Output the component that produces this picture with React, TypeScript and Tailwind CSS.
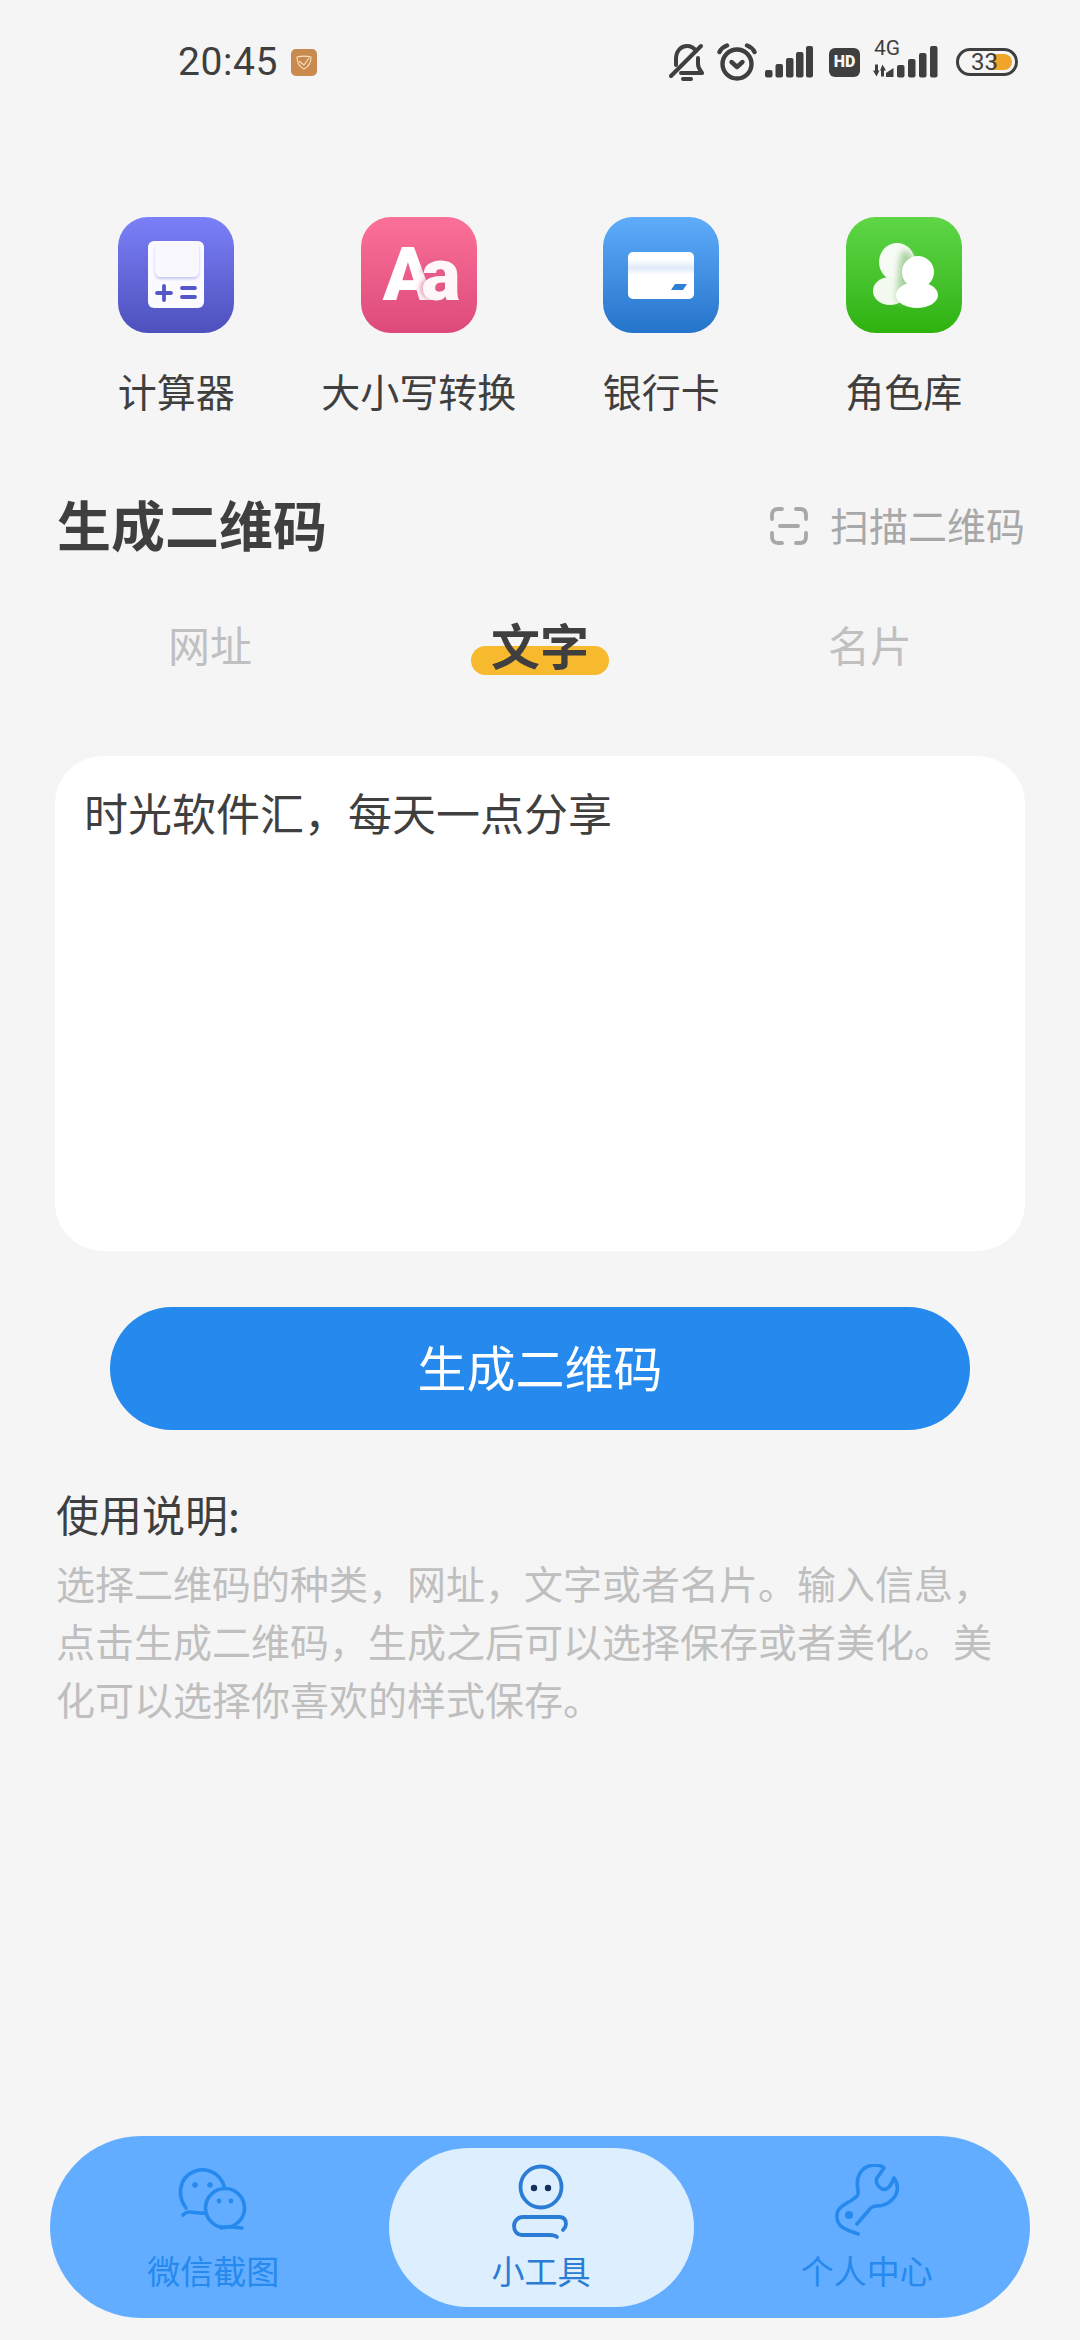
import React from "react";

const Signal = ({ className }: { className?: string }) => (
  <svg viewBox="0 0 48 32" className={className} fill="#3f3f3f">
    <rect x="0" y="24" width="7.500" height="7.500" rx="2" />
    <rect x="10.500" y="18" width="7.500" height="13.500" rx="2" />
    <rect x="21" y="12" width="7.500" height="19.500" rx="2" />
    <rect x="31" y="6" width="7.500" height="25.500" rx="2" />
    <rect x="41" y="0" width="7" height="31.500" rx="2" />
  </svg>
);

const StatusBar = () => (
  <div className="flex h-[124px] items-center pl-[178px] pr-[62px]">
    <span className="font-['Roboto',sans-serif] text-[39px] leading-none tracking-[0.6px] text-[#3f3f3f]">20:45</span>
    <div className="ml-[13px] flex h-[27px] w-[26px] items-center justify-center rounded-[5px] bg-[#c88a4e]">
      <svg viewBox="0 0 18 18" className="h-[18px] w-[18px]" fill="none" stroke="#fbe3bd" strokeWidth="1.100" strokeLinejoin="round">
        <path d="M2 4 C6 3 12 3 16 4 C16 10 13 14 9 16 C5 14 2 10 2 4 Z" />
        <path d="M4 8 L9 12 L14 5" />
      </svg>
    </div>
    <div className="ml-auto flex items-center">
      <svg viewBox="0 0 36 38" className="h-[38px] w-[36px]" fill="none" stroke="#3f3f3f" strokeWidth="4" strokeLinecap="round" strokeLinejoin="round">
        <path d="M8 22 V16 C8 8 13 3 19 3 C23 3 26 5 28 8" />
        <path d="M30 15 V21 C30 25 32 27 34 30 H13" />
        <path d="M3 33 L33 3" />
        <path d="M15 36 H23" />
      </svg>
      <svg viewBox="0 0 40 38" className="ml-[13px] h-[38px] w-[40px]" fill="none" stroke="#3f3f3f" strokeWidth="4.400" strokeLinecap="round" strokeLinejoin="round">
        <circle cx="20" cy="21" r="14.500" />
        <path d="M14.500 19 L20 24 L25.500 19" />
        <path d="M2.500 9 C4 6 7 3.500 10 2.500" />
        <path d="M37.500 9 C36 6 33 3.500 30 2.500" />
      </svg>
      <Signal className="ml-[8px] h-[32px] w-[48px]" />
      <div className="ml-[16px] flex h-[29px] w-[31px] items-center justify-center rounded-[6px] bg-[#3f3f3f] font-['Roboto',sans-serif] text-[16px] leading-none font-black text-[#f5f5f5]">HD</div>
      <div className="relative ml-[12px] h-[36px] w-[66px]">
        <span className="absolute top-[-6px] left-[2px] font-['Roboto',sans-serif] text-[21px] leading-[21px] text-[#3f3f3f]">4G</span>
        <svg viewBox="0 0 15 12" className="absolute top-[20px] left-0 h-[13px] w-[15px]" fill="#3f3f3f">
          <path d="M3 0 H6 V6 H7.500 L4.500 12 L1 6 H3 Z" />
          <path d="M9 12 H12 V6 H14 L10.500 0 L8 6 H9 Z" />
        </svg>
        <svg viewBox="0 0 52 32" className="absolute top-[2px] left-[14px] h-[32px] w-[52px]" fill="#3f3f3f">
          <path d="M0 31 V27 L7.500 22 V31 Z" />
          <rect x="11" y="19" width="7.500" height="12.500" rx="2" />
          <rect x="22" y="13" width="7.500" height="18.500" rx="2" />
          <rect x="33" y="7" width="7.500" height="24.500" rx="2" />
          <rect x="44" y="0" width="7.500" height="31.500" rx="2" />
        </svg>
      </div>
      <div className="relative ml-[18px] flex h-[28px] w-[62px] items-center rounded-full border-[3px] border-[#3f3f3f]">
        <div className="absolute top-[3px] right-[3px] h-[16px] w-[19px] rounded-r-full bg-[#f0a429]" />
        <span className="relative ml-[12px] font-['Roboto',sans-serif] text-[24px] leading-none text-[#3f3f3f]">33</span>
      </div>
    </div>
  </div>
);

const CalculatorIcon = () => (
  <div className="flex h-[116px] w-[116px] items-center justify-center rounded-[30px] bg-gradient-to-b from-[#7b80f8] to-[#4e50bd]">
    <svg viewBox="0 0 56 68" className="h-[68px] w-[56px]">
      <defs>
        <filter id="screenShadow" x="-20%" y="-20%" width="140%" height="150%">
          <feDropShadow dx="0" dy="2" stdDeviation="1.500" floodColor="#8a8be0" floodOpacity="0.5" />
        </filter>
      </defs>
      <rect width="56" height="67" rx="6" fill="#fbfbff" />
      <rect x="7" y="1" width="44" height="35" rx="6" fill="#f8f8fe" filter="url(#screenShadow)" />
      <path d="M9 52 H23 M16 45 V59" stroke="#5557c8" strokeWidth="3.800" strokeLinecap="round" />
      <path d="M34 47 H47 M34 56 H47" stroke="#5557c8" strokeWidth="3.800" strokeLinecap="round" />
    </svg>
  </div>
);

const CaseIcon = () => (
  <div className="relative h-[116px] w-[116px] overflow-hidden rounded-[30px] bg-gradient-to-b from-[#fb7098] to-[#dd4a7a]">
    <span className="absolute top-[18px] left-[22px] font-['Roboto',sans-serif] text-[74px] leading-[80px] font-black tracking-[-12px] text-white">
      A<span className="text-[#fff6f9] [text-shadow:-3px_0_5px_rgba(214,90,130,0.55)]">a</span>
    </span>
  </div>
);

const CardIcon = () => (
  <div className="flex h-[116px] w-[116px] items-center justify-center rounded-[30px] bg-gradient-to-b from-[#5eacfa] to-[#2474cb]">
    <svg viewBox="0 0 66 47" className="h-[47px] w-[66px]">
      <defs>
        <linearGradient id="cardStripe" x1="0" y1="0" x2="0" y2="1">
          <stop offset="0" stopColor="#ffffff" />
          <stop offset="0.45" stopColor="#e6f0fb" />
          <stop offset="0.55" stopColor="#dfeafa" />
          <stop offset="1" stopColor="#ffffff" />
        </linearGradient>
      </defs>
      <rect width="66" height="47" rx="5" fill="#ffffff" />
      <rect y="7" width="66" height="16" fill="url(#cardStripe)" />
      <path d="M43 38 L47 32 H59 L55 38 Z" fill="#2f7fd4" />
    </svg>
  </div>
);

const PeopleIcon = () => (
  <div className="h-[116px] w-[116px] overflow-hidden rounded-[30px] bg-gradient-to-b from-[#5ed646] to-[#2eb20c]">
    <svg viewBox="0 0 116 116" className="h-[116px] w-[116px]">
      <defs>
        <filter id="personBlur" x="-30%" y="-30%" width="160%" height="160%">
          <feGaussianBlur stdDeviation="3" />
        </filter>
      </defs>
      <ellipse cx="51" cy="45" rx="18" ry="19" fill="#f7fbf5" />
      <ellipse cx="44" cy="74" rx="17" ry="14" fill="#f3f9f0" />
      <path d="M58 32 C50 44 54 60 50 84 L66 84 L68 40 Z" fill="#a9d2a0" filter="url(#personBlur)" />
      <circle cx="72" cy="55" r="16" fill="#ffffff" />
      <ellipse cx="71" cy="78" rx="21" ry="13" fill="#ffffff" />
    </svg>
  </div>
);

const tools = [
  { label: "计算器", Icon: CalculatorIcon },
  { label: "大小写转换", Icon: CaseIcon },
  { label: "银行卡", Icon: CardIcon },
  { label: "角色库", Icon: PeopleIcon },
];

const ChatIcon = () => (
  <svg viewBox="0 0 70 64" className="h-[64px] w-[70px]" fill="none" stroke="#2589ee" strokeWidth="3.600" strokeLinecap="round">
    <path d="M8 40 C-1 28 1 10 15 4 C28 -2 42 5 46 18" />
    <path d="M5 47 C11 41 17 46 27 45" />
    <circle cx="47" cy="40" r="19.500" />
    <path d="M43 60 C51 57 56 60 64 60" />
    <circle cx="17" cy="17" r="2.800" fill="#2589ee" stroke="none" />
    <circle cx="32" cy="17" r="2.800" fill="#2589ee" stroke="none" />
    <circle cx="41" cy="33" r="2.400" fill="#2589ee" stroke="none" />
    <circle cx="53" cy="33" r="2.400" fill="#2589ee" stroke="none" />
  </svg>
);

const RobotIcon = () => (
  <svg viewBox="0 0 60 80" className="h-[80px] w-[60px]" fill="none" stroke="#2a7cd4" strokeWidth="3.800" strokeLinecap="round">
    <circle cx="30" cy="27" r="20.500" />
    <circle cx="23" cy="28" r="3.200" fill="#12305c" stroke="none" />
    <circle cx="37" cy="28" r="3.200" fill="#12305c" stroke="none" />
    <path d="M46 77 C44 75 42 75 38 75 H12 C5 75 3 70 3 66 C3 61 7 57 12 57 H48 C53 57 55 60 55 64 C55 66 54 68 52 70" />
  </svg>
);

const WrenchIcon = () => (
  <svg viewBox="0 0 66 72" className="h-[72px] w-[66px]" fill="none" stroke="#2589ee" strokeWidth="3.600" strokeLinecap="round" strokeLinejoin="round">
    <path d="M24 70 C14 66 2 64 3 51 C3 44 10 41 18 36 C22 33 25 32 24 26 C21 12 28 2 40 1 C44 1 48 2 50 4 L43 14 C41 18 44 23 48 25 C53 27 57 22 60 14 C63 18 64 22 63 27 C61 36 52 42 43 42 C39 42 37 43 35 46 L23 60" />
    <circle cx="15" cy="51" r="4" fill="#2589ee" stroke="none" />
  </svg>
);

const TabItem = ({ label, Icon }: { label: string; Icon: () => React.JSX.Element }) => (
  <>
    <div className="flex h-[80px] items-center">
      <Icon />
    </div>
    <span className="mt-[10px] text-[33px] leading-[40px]">{label}</span>
  </>
);

export default function App() {
  return (
    <div className="flex min-h-[2340px] flex-col bg-[#f5f5f5] font-['Noto_Sans_CJK_SC',sans-serif] text-[#3f3f3f]">
      <StatusBar />

      {/* Tools */}
      <div className="mt-[93px] grid grid-cols-4 px-[55px]">
        {tools.map(({ label, Icon }) => (
          <div key={label} className="flex flex-col items-center gap-[32px]">
            <Icon />
            <span className="text-[39px] leading-[50px]">{label}</span>
          </div>
        ))}
      </div>

      {/* QR header */}
      <div className="mt-[79px] flex h-[60px] items-center justify-between pr-[55px] pl-[57px]">
        <h1 className="text-[54px] leading-[60px] font-bold">生成二维码</h1>
        <div className="flex items-center gap-[22px] text-[#a8a8a8]">
          <svg viewBox="0 0 38 38" className="h-[38px] w-[38px] translate-y-[2px]" fill="none" stroke="#a8a8a8" strokeWidth="3.800" strokeLinecap="round">
            <path d="M12 2 H8 C4 2 2 4 2 8 V12" />
            <path d="M26 2 H30 C34 2 36 4 36 8 V12" />
            <path d="M12 36 H8 C4 36 2 34 2 30 V26" />
            <path d="M26 36 H30 C34 36 36 34 36 30 V26" />
            <path d="M10 19 H28" />
          </svg>
          <span className="text-[39px] leading-[50px]">扫描二维码</span>
        </div>
      </div>

      {/* Type tabs */}
      <div className="mt-[60px] flex h-[60px] items-center px-[55px]">
        <span className="ml-[113px] text-[42px] leading-[60px] text-[#c0c0c0]">网址</span>
        <div className="relative ml-[219px] flex h-[60px] w-[138px] justify-center">
          <div className="absolute top-[32px] h-[29px] w-[138px] rounded-full bg-[#f7b92e]" />
          <span className="relative text-[49px] leading-[60px] font-bold">文字</span>
        </div>
        <span className="ml-[219px] text-[42px] leading-[60px] text-[#c0c0c0]">名片</span>
      </div>

      <div className="mx-[55px] mt-[82px] h-[495px] rounded-[48px] bg-white px-[29px] py-[26px] text-[44px] leading-[60px]">
        时光软件汇，每天一点分享
      </div>

      <button className="mx-[110px] mt-[56px] h-[123px] rounded-full bg-[#2589ee] pb-[5px] text-[49px] text-white">
        生成二维码
      </button>

      <div className="mt-[58px] px-[56px]">
        <div className="text-[43px] leading-[50px]">使用说明:</div>
        <p className="mt-[15px] w-[945px] text-[39px] leading-[58px] text-[#bfbfbf]">
          选择二维码的种类，网址，文字或者名片。输入信息，点击生成二维码，生成之后可以选择保存或者美化。美化可以选择你喜欢的样式保存。
        </p>
      </div>

      {/* Bottom nav */}
      <nav className="mx-[50px] mt-auto mb-[22px] flex h-[182px] items-center rounded-full bg-[#62adff]">
        <div className="flex h-[159px] flex-1 flex-col items-center pt-[12px] pr-[12px] text-[#2589ee]">
          <TabItem label="微信截图" Icon={ChatIcon} />
        </div>
        <div className="flex h-[159px] w-[305px] flex-col items-center rounded-full bg-[#ddeeff] pt-[12px] text-[#2a7cd4]">
          <TabItem label="小工具" Icon={RobotIcon} />
        </div>
        <div className="flex h-[159px] flex-1 flex-col items-center pt-[12px] pl-[10px] text-[#2589ee]">
          <TabItem label="个人中心" Icon={WrenchIcon} />
        </div>
      </nav>
    </div>
  );
}
